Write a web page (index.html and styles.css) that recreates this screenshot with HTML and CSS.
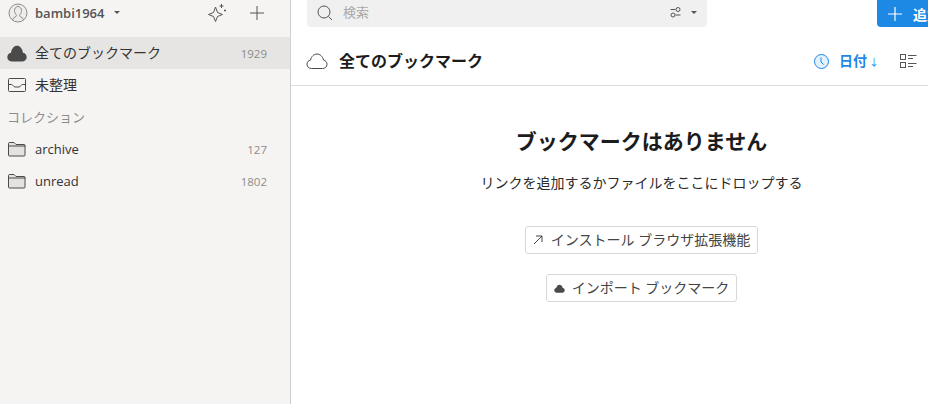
FILE: index.html
```html
<!DOCTYPE html>
<html lang="ja">
<head>
<meta charset="utf-8">
<title>全てのブックマーク</title>
<link rel="stylesheet" href="styles.css">
</head>
<body>
<div class="app">
  <aside class="sidebar">
    <div class="account">
      <svg class="avatar" width="20" height="20" viewBox="0 0 20 20" fill="#eeedec" stroke="#8a8a8a" stroke-width="1"><circle cx="10" cy="10" r="9"/><path d="M4.500 17c.5-2.500 2.500-2.800 3.600-3.600.5-.4.4-1.200 0-1.700C7 10.500 6.500 9 6.500 7.500 6.500 5.300 8 3.500 10 3.500s3.500 1.800 3.500 4c0 1.500-.5 3-1.600 4.200-.4.500-.5 1.300 0 1.700 1.100.8 3.100 1.100 3.600 3.600" fill="none"/></svg>
      <span class="account-name">bambi1964</span>
      <span class="caret"></span>
      <span class="grow"></span>
      <svg class="spark" width="20" height="20" viewBox="0 0 20 20" fill="none" stroke="#555" stroke-width="1"><path d="M8.500 5 10.500 10.500l5 2-5 2-2 5-2-5-5-2 5-2z" transform="translate(0 -1)"/><path d="M14.500 1v4M12.500 3h4M18 6.500v2M17 7.500h2"/></svg>
      <svg class="plus" width="16" height="16" viewBox="0 0 16 16" stroke="#555" stroke-width="1"><path d="M8 1v14M1 8h14"/></svg>
    </div>
    <nav class="nav">
      <div class="row active">
        <svg width="20" height="17" viewBox="0 0 20 17" fill="#4a4a4a"><path d="M5 16.500C2.500 16.500.3 14.800.3 12.300.3 10 1.800 8.300 4 7.800 4.700 3.500 7 .8 10 .8s5.300 2.700 6 7c2.200.5 3.700 2.200 3.700 4.500 0 2.500-2.200 4.200-4.700 4.200z"/></svg>
        <span class="label">全てのブックマーク</span><span class="count">1929</span>
      </div>
      <div class="row">
        <svg width="20" height="16" viewBox="0 0 20 16" fill="none" stroke="#4a4a4a" stroke-width="1"><rect x="1.500" y="1.500" width="17" height="13" rx="1"/><path d="M1.500 7.500h3c1.500 0 2 2.500 3.500 2.500h4c1.500 0 2-2.500 3.500-2.500h3"/></svg>
        <span class="label">未整理</span>
      </div>
      <div class="section">コレクション</div>
      <div class="row">
        <svg width="20" height="16" viewBox="0 0 20 16" fill="#e3e2e1" stroke="#4a4a4a" stroke-width="1"><path d="M1.500 14V2.500a1 1 0 0 1 1-1h4.500l2 2h8a1 1 0 0 1 1 1V14a1 1 0 0 1-1 1h-14.500a1 1 0 0 1-1-1z"/><path d="M1.500 5h17" fill="none"/></svg>
        <span class="label latin">archive</span><span class="count">127</span>
      </div>
      <div class="row">
        <svg width="20" height="16" viewBox="0 0 20 16" fill="#e3e2e1" stroke="#4a4a4a" stroke-width="1"><path d="M1.500 14V2.500a1 1 0 0 1 1-1h4.500l2 2h8a1 1 0 0 1 1 1V14a1 1 0 0 1-1 1h-14.500a1 1 0 0 1-1-1z"/><path d="M1.500 5h17" fill="none"/></svg>
        <span class="label latin">unread</span><span class="count">1802</span>
      </div>
    </nav>
  </aside>
  <main class="main">
    <div class="topbar">
      <div class="search">
        <svg class="search-icon" width="16" height="16" viewBox="0 0 16 16" fill="none" stroke="#555" stroke-width="1"><circle cx="7" cy="7" r="6"/><path d="M11.500 11.500 15 15"/></svg>
        <span class="placeholder">検索</span>
        <svg class="filter" width="11" height="11" viewBox="0 0 11 11" fill="none" stroke="#555" stroke-width="1"><circle cx="8" cy="2.500" r="2"/><circle cx="3" cy="8" r="2"/><path d="M.5 2.500h5M5.500 8h5"/></svg>
        <span class="caret"></span>
      </div>
      <div class="add">
        <svg width="14" height="14" viewBox="0 0 14 14" stroke="#fff" stroke-width="1.200"><path d="M7 0v14M0 7h14"/></svg>
        <span>追加</span>
      </div>
    </div>
    <header class="header">
      <svg width="22" height="16" viewBox="0 0 22 16" fill="none" stroke="#4a4a4a" stroke-width="1"><path d="M5.500 15.500C3 15.500 1 13.800 1 11.300 1 9 2.500 7.500 4.500 7.100 5.200 3.500 8 1 11 1s5.800 2.500 6.500 6.100c2 .4 3.500 1.900 3.500 4.200 0 2.500-2 4.200-4.500 4.200z"/></svg>
      <h1 class="title">全てのブックマーク</h1>
      <span class="grow"></span>
      <svg width="15" height="15" viewBox="0 0 15 15" fill="#e3f1fc" stroke="#1e88e5" stroke-width="1"><circle cx="7.500" cy="7.500" r="7"/><path d="M7 3.500V8l2.500 2.500" fill="none"/></svg>
      <span class="sort">日付</span>
      <span class="arrow">↓</span>
      <svg class="view" width="17" height="14" viewBox="0 0 17 14" fill="none" stroke="#555" stroke-width="1"><rect x=".5" y=".5" width="5" height="5"/><rect x=".5" y="8.500" width="5" height="5"/><path d="M8 1.500h8.500M8 4.500h5M8 9.500h8.500M8 12.500h5"/></svg>
    </header>
    <section class="empty">
      <h2 class="empty-title">ブックマークはありません</h2>
      <p class="empty-text">リンクを追加するかファイルをここにドロップする</p>
      <div class="btn btn-install">
        <svg width="10" height="10" viewBox="0 0 10 10" fill="none" stroke="#444" stroke-width="1"><path d="M1 9 9 1M3 1h6v6"/></svg>
        <span>インストール ブラウザ拡張機能</span>
      </div>
      <div class="btn btn-import">
        <svg width="11" height="9" viewBox="0 0 20 16" fill="#4a4a4a"><path d="M5 15.500C2.500 15.500.5 13.800.5 11.300.5 9 2 7.500 4 7.100 4.700 3.500 7 1 10 1s5.300 2.500 6 6.100c2 .4 3.500 1.900 3.500 4.200 0 2.500-2 4.200-4.500 4.200z"/></svg>
        <span>インポート ブックマーク</span>
      </div>
    </section>
  </main>
</div>
</body>
</html>
```
FILE: styles.css
```css
* { box-sizing: border-box; }
html, body { margin: 0; height: 100%; overflow: hidden; background: #fff; }
body {
  font-family: "Open Sans", "Noto Sans CJK JP", sans-serif;
  font-size: 14px;
  color: #2b2b2b;
}
.app { display: flex; height: 404px; width: 928px; overflow: hidden; }
.grow { flex: 1; }
.sidebar {
  flex: 0 0 291px;
  background: #f5f4f3;
  border-right: 1px solid #cfcfcf;
}
.account {
  display: flex;
  align-items: center;
  height: 37px;
  padding: 0 25px 12px 8px;
}
.avatar { flex: none; }
.account-name { margin-left: 7px; font-size: 13px; font-weight: 600; color: #555; }
.caret {
  width: 0;
  height: 0;
  margin-left: 9px;
  border-left: 3px solid transparent;
  border-right: 3px solid transparent;
  border-top: 3px solid #555;
}
.spark { margin-right: 22px; }
.row {
  display: flex;
  align-items: center;
  height: 32px;
  padding: 0 23px 0 7px;
  gap: 8px;
}
.row.active { background: #e6e5e4; }
.label { flex: 1; padding-bottom: 2px; color: #333; font-size: 14px; }
.label.latin { padding-bottom: 1px; font-size: 13px; }
.count { font-size: 11.500px; color: #8c8c8c; }
.section {
  height: 32px;
  padding-left: 7px;
  line-height: 32px;
  font-size: 13px;
  color: #8c8c8c;
}
.main { flex: 1; min-width: 0; display: flex; flex-direction: column; }
.topbar {
  display: flex;
  align-items: flex-end;
  height: 37px;
  padding: 0 0 10px 16px;
  overflow: hidden;
}
.search {
  display: flex;
  align-items: center;
  flex: none;
  width: 400px;
  height: 32px;
  padding: 3px 10px 0 10px;
  background: #f0f0f0;
  border-radius: 4px;
}
.placeholder { flex: 1; margin-left: 10px; padding-bottom: 2px; font-size: 13px; color: #a8a8a8; }
.search .caret { margin-left: 10px; }
.add {
  display: flex;
  align-items: center;
  flex: none;
  width: 90px;
  height: 32px;
  margin-left: 170px;
  padding: 5px 0 0 11px;
  gap: 11px;
  background: #1e88e5;
  border-radius: 4px;
  color: #fff;
  font-weight: 700;
  font-size: 14px;
}
.header {
  display: flex;
  align-items: center;
  flex: none;
  height: 49px;
  padding: 0 11px 0 15px;
  border-bottom: 1px solid #dedede;
}
.title { margin: 0 0 2px 11px; font-size: 16px; font-weight: 700; color: #1c1c1c; }
.sort { margin: 0 0 2px 10px; font-size: 14px; font-weight: 700; color: #1e88e5; }
.arrow { margin-left: 2px; font-size: 10px; color: #1e88e5; }
.view { margin-left: 21px; }
.empty { display: flex; flex-direction: column; align-items: center; width: 701px; }
.empty-title { margin: 40px 0 0; font-size: 21px; line-height: 30px; font-weight: 700; color: #1c1c1c; }
.empty-text { margin: 17px 0 0; font-size: 14px; line-height: 20px; color: #2b2b2b; }
.btn {
  display: flex;
  align-items: center;
  gap: 8px;
  height: 28px;
  background: #fff;
  border: 1px solid #d8d8d8;
  border-radius: 3px;
  font-size: 14px;
  color: #444;
}
.btn span { padding-bottom: 2px; }
.btn-install { margin-top: 33px; padding: 0 7px; }
.btn-import { margin-top: 20px; padding: 0 7px; gap: 7px; }
```
